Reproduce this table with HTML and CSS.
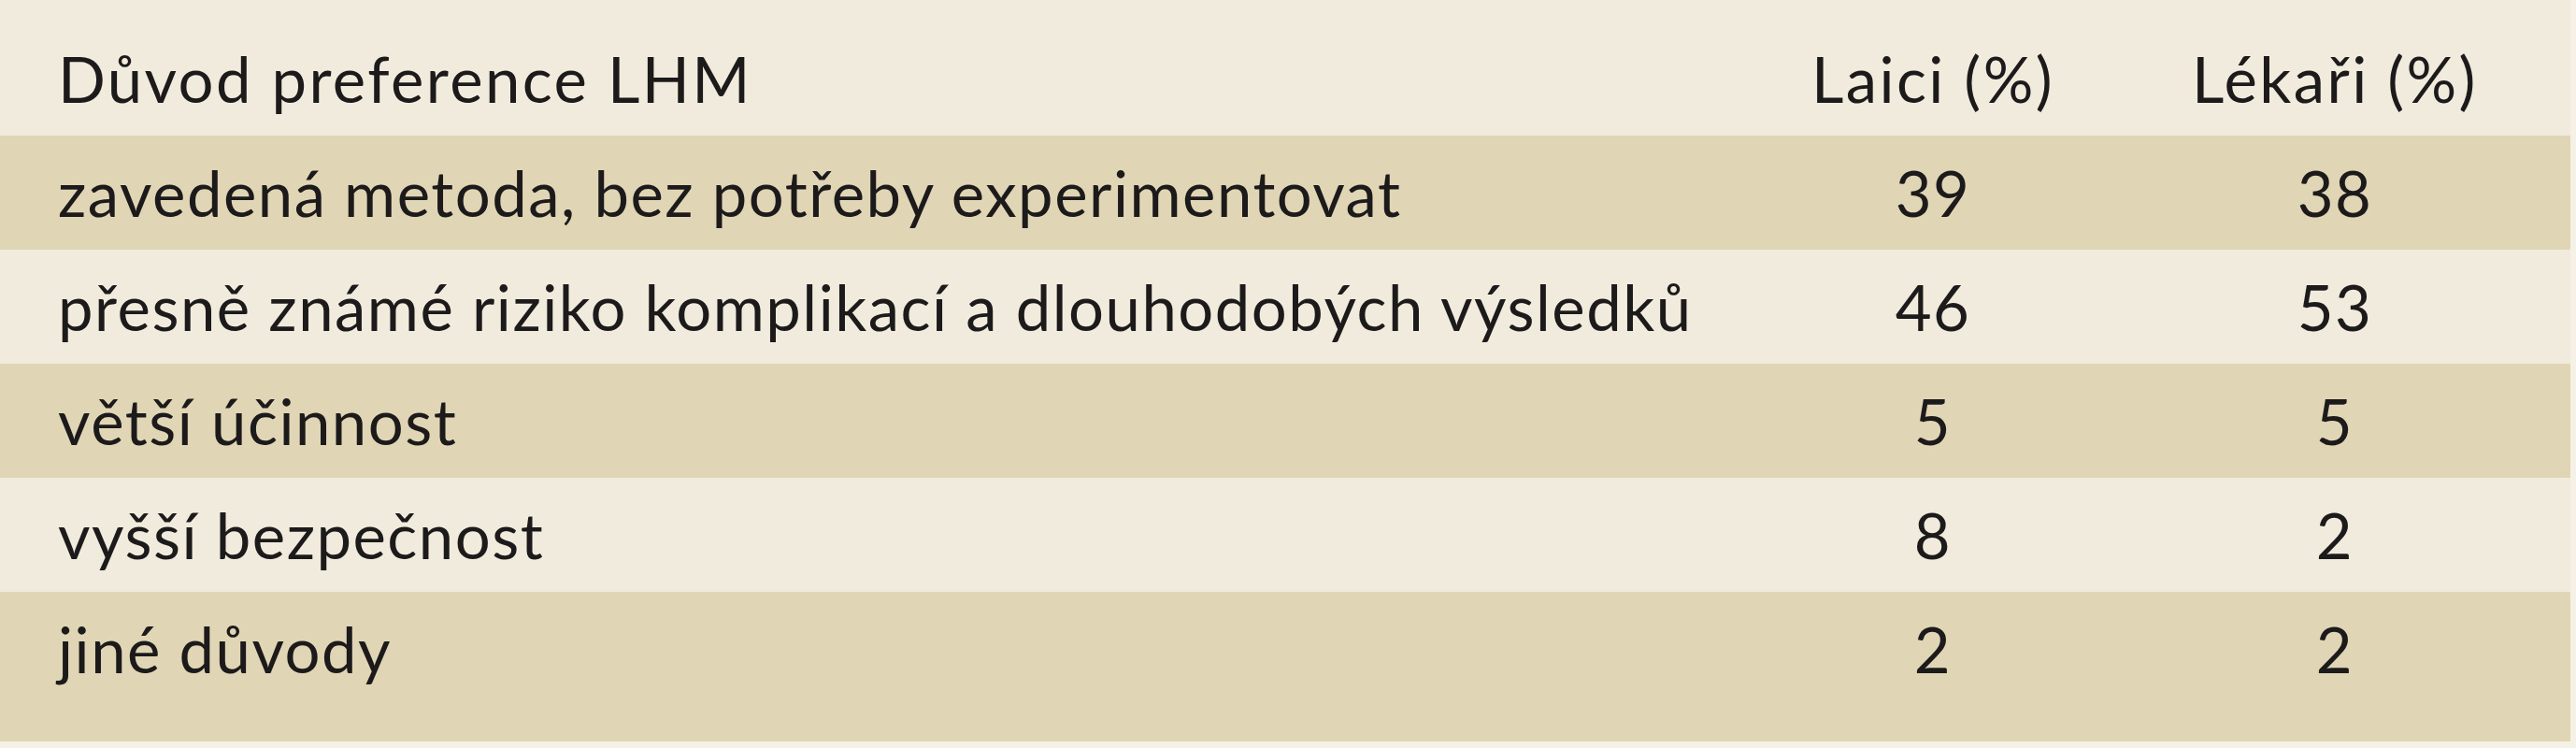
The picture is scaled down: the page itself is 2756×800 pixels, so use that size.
FILE: index.html
```html
<!DOCTYPE html>
<html lang="cs">
<head>
<meta charset="utf-8">
<title>Důvod preference LHM</title>
<link rel="stylesheet" href="styles.css">
</head>
<body>
<table class="tbl">
  <thead>
    <tr class="head">
      <th class="c1">Důvod preference LHM</th>
      <th class="c2">Laici (%)</th>
      <th class="c3">Lékaři (%)</th>
    </tr>
  </thead>
  <tbody>
    <tr class="shade">
      <td class="c1">zavedená metoda, bez potřeby experimentovat</td>
      <td class="c2">39</td>
      <td class="c3">38</td>
    </tr>
    <tr>
      <td class="c1">přesně známé riziko komplikací a dlouhodobých výsledků</td>
      <td class="c2">46</td>
      <td class="c3">53</td>
    </tr>
    <tr class="shade">
      <td class="c1">větší účinnost</td>
      <td class="c2">5</td>
      <td class="c3">5</td>
    </tr>
    <tr>
      <td class="c1">vyšší bezpečnost</td>
      <td class="c2">8</td>
      <td class="c3">2</td>
    </tr>
    <tr class="shade last">
      <td class="c1">jiné důvody</td>
      <td class="c2">2</td>
      <td class="c3">2</td>
    </tr>
  </tbody>
</table>
</body>
</html>
```

FILE: styles.css
```css
html, body {
  margin: 0;
  padding: 0;
  background: #f5f1e6;
}

body {
  font-family: Lato, "Liberation Sans", sans-serif;
  color: #1c1a1a;
}

.tbl {
  width: 2750px;
  border-collapse: collapse;
  border-spacing: 0;
  table-layout: fixed;
  background: #f0ebdd;
  font-size: 67px;
  line-height: 122px;
  letter-spacing: 1.5px;
}

.tbl th,
.tbl td {
  box-sizing: border-box;
  padding: 0;
  font-weight: normal;
  white-space: nowrap;
  vertical-align: top;
}

.tbl .c1 {
  width: 1850px;
  padding-left: 62px;
  text-align: left;
}

.tbl .c2 {
  width: 436px;
  text-align: center;
}

.tbl .c3 {
  width: 464px;
  padding-right: 40px;
  text-align: center;
}

.head th {
  padding-top: 23px;
  letter-spacing: 2.4px;
}

.shade {
  background: #e0d5b5;
}

.last td {
  padding-bottom: 38px;
}
```
